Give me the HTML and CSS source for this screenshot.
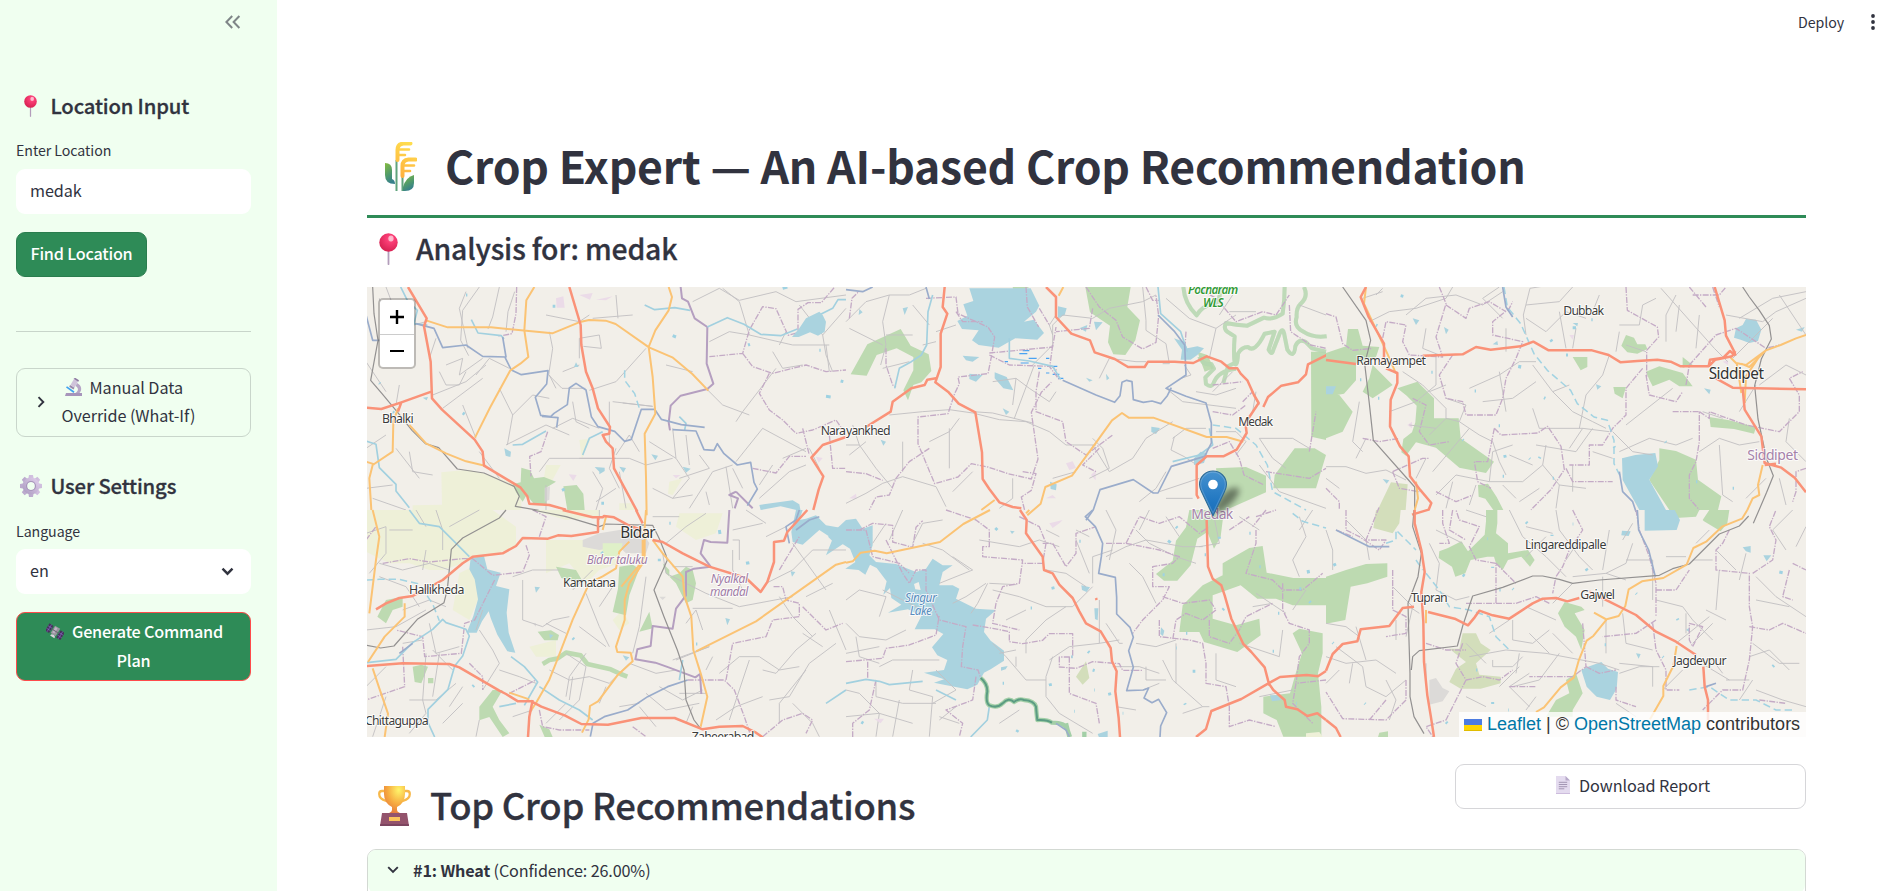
FILE: index.html
```html
<!DOCTYPE html>
<html lang="en">
<head>
<meta charset="utf-8">
<title>Crop Expert</title>
<link rel="stylesheet" href="styles.css">
</head>
<body>
<svg width="0" height="0" class="defs">
  <defs>
    <radialGradient id="pinHead" cx=".62" cy=".3" r=".75"><stop offset="0" stop-color="#ff9ab5"/><stop offset=".25" stop-color="#fb3f77"/><stop offset="1" stop-color="#d41f4f"/></radialGradient>
    <linearGradient id="leaf" x1="0" y1="0" x2=".4" y2="1"><stop offset="0" stop-color="#86bb3f"/><stop offset=".6" stop-color="#4f9a6c"/><stop offset="1" stop-color="#37808b"/></linearGradient>
    <linearGradient id="gold" gradientUnits="userSpaceOnUse" x1="10" y1="34" x2="26" y2="0"><stop offset="0" stop-color="#ffae3d"/><stop offset="1" stop-color="#ffdf4f"/></linearGradient>
    <radialGradient id="cup" cx=".7" cy=".15" r=".9"><stop offset="0" stop-color="#fff56a"/><stop offset=".6" stop-color="#f6a83f"/><stop offset="1" stop-color="#e57c3e"/></radialGradient>
    <linearGradient id="gearFill" x1="1" y1="0" x2="0" y2="1"><stop offset="0" stop-color="#dccbe8"/><stop offset="1" stop-color="#b09fc4"/></linearGradient>
    <linearGradient id="markerFill" x1="0" y1="0" x2="0" y2="1"><stop offset="0" stop-color="#4592cf"/><stop offset=".7" stop-color="#2076c1"/><stop offset="1" stop-color="#1d6fb8"/></linearGradient>
    <filter id="soft" x="-50%" y="-50%" width="200%" height="200%"><feGaussianBlur stdDeviation="3"/></filter>
    <symbol id="pushpin" viewBox="0 0 19 32">
      <path d="M8.6 16h1.8v15.5q-.9 1-1.8 0z" fill="#b39dbb"/>
      <circle cx="9.5" cy="9.5" r="9.2" fill="url(#pinHead)"/>
      <ellipse cx="12" cy="5.6" rx="2.6" ry="3" fill="#ffd0dc" opacity=".75"/>
    </symbol>
  </defs>
</svg>
<div class="app">
  <aside class="sidebar">
    <div class="collapse">
      <svg width="16" height="14" viewBox="0 0 16 14" class="stroke-grey"><path d="M7.2 1 1.4 7l5.8 6M14.4 1 8.6 7l5.8 6"/></svg>
    </div>
    <h3 class="side-heading">
      <span class="side-icon"><svg width="13" height="22" viewBox="0 0 19 32"><use href="#pushpin"/></svg></span>
      <span>Location Input</span>
    </h3>
    <label class="label label-location">Enter Location</label>
    <div class="field"><span>medak</span></div>
    <button class="btn btn-find"><span>Find Location</span></button>
    <hr class="divider">
    <div class="override">
      <svg width="8" height="12" viewBox="0 0 8 12" class="stroke-dark"><path d="M1.5 1.2 6.3 6l-4.8 4.8"/></svg>
      <div class="override-text">
        <svg width="18" height="18" viewBox="0 0 18 18" class="microscope">
          <path d="M1 15h16v3H0z" fill="#a795bb"/>
          <path d="M12 5c4.500 2 5.500 7 2.500 10h-4c3-2 3.500-5 0-7z" fill="#b6a6c6"/>
          <path d="M5.500 7 9.500 0l4 2.500-4 7z" fill="#cfc3da"/>
          <path d="m8.500.5 2-.5 3.500 2.200-.7 1.600z" fill="#8d7aa1"/>
          <path d="m5 7 4.500 2.800-1 1.700-4.300-2.700z" fill="#9a88ad"/>
          <path d="m2 8.200 7.500 5.200-1 1.500L1 9.600z" fill="#3fa4f0"/>
        </svg><span>Manual Data</span><br><span>Override (What-If)</span>
      </div>
    </div>
    <h3 class="side-heading settings">
      <span class="side-icon"><svg width="22" height="22" viewBox="0 0 22 22">
        <g fill="url(#gearFill)"><path d="M9 0h4l.7 4h-5.400zM9 22h4l.7-4h-5.400zM0 9v4l4 .7V8.300zM22 9v4l-4 .7V8.300z"/><path d="M9 0h4l.7 4h-5.400zM9 22h4l.7-4h-5.400zM0 9v4l4 .7V8.300zM22 9v4l-4 .7V8.300z" transform="rotate(45 11 11)"/></g>
        <circle cx="11" cy="11" r="6.200" fill="none" stroke="url(#gearFill)" stroke-width="4.600"/>
        <circle cx="11" cy="11" r="4.500" fill="none" stroke="#a796ba" stroke-width="1.100"/>
      </svg></span>
      <span>User Settings</span>
    </h3>
    <label class="label label-language">Language</label>
    <div class="field select"><span>en</span>
      <svg width="13" height="9" viewBox="0 0 13 9" class="stroke-thick"><path d="M1.500 1.700 6.500 6.700l5-5"/></svg>
    </div>
    <button class="btn btn-generate">
      <span class="gen-line"><svg width="18" height="17" viewBox="0 0 18 17">
        <g transform="rotate(32 9 8.500)"><path d="M0 4.500h4.800v8.500H0zM13.200 4.500H18V13h-4.800z" fill="#453459"/><path d="M2.400 4.500V13M0 7.300h4.800M0 10.200h4.800M15.600 4.500V13M13.200 7.300H18M13.200 10.200H18" stroke="#8a63c8" stroke-width=".6"/><path d="M6 3.500h6V12H6z" fill="#9b93a0"/><path d="M7 4.500h2.500v6H7z" fill="#bdb5c3"/><path d="M4.800 8h8.400" stroke="#6a6272"/><path d="M7 14.500a2.500 2.500 0 0 1 5 0z" fill="#d9d2dd"/></g>
      </svg><span>Generate Command</span></span>
      <span>Plan</span>
    </button>
  </aside>

  <main class="main">
    <header class="topbar">
      <span class="deploy">Deploy</span>
      <svg width="4" height="16" viewBox="0 0 4 16"><g fill="#31333f"><circle cx="2" cy="2" r="1.900"/><circle cx="2" cy="8" r="1.900"/><circle cx="2" cy="14" r="1.900"/></g></svg>
    </header>
    <h1 class="title">
      <svg width="32" height="50" viewBox="0 0 32 50">
        <path d="M11.500 18v31M17.500 34v15" stroke="#5fa37c" stroke-width="2"/>
        <path d="M0 21q7 0 7 7v9q3 1 3 5-10 0-10-9z" fill="url(#leaf)"/>
        <path d="M29 33v8q0 8-9 8h-2v-4q3-10 11-12z" fill="url(#leaf)"/>
        <g fill="none" stroke="url(#gold)" stroke-linecap="round">
          <path d="M12.500 18V8q0-6 6-6.500h7" stroke-width="4"/><path d="M14 7.500h10M14 13h6" stroke-width="2.600"/>
          <path d="M17.500 34V24q0-6 6-6.500h7" stroke-width="4"/><path d="M19 23.500h10M19 29h6" stroke-width="2.600"/>
        </g>
      </svg>
      <span>Crop Expert — An AI-based Crop Recommendation</span>
    </h1>
    <h3 class="analysis">
      <svg width="19" height="32"><use href="#pushpin"/></svg>
      <span>Analysis for: medak</span>
    </h3>

    <div class="map">
      <svg class="map-canvas" width="1439" height="450" viewBox="0 0 1439 450">
        <!-- north-west -->
        <g transform="translate(-1 -2) scale(.33333)">
          <path class="farm" d="M226 562l80-8 60 14 80 30 20 40 0 37H140v-14l88-2zM640 465l34-4-26 60zM540 540l44 0-34 62-20 0zM910 590l40-10-30 50-14-4zM760 655h40l10 20h-50z"/>
          <path class="wood" d="M466 548l26 8 12 24 30-4 36 14-30 18 2 52-36 0-24-30-12 20-20-28-10-24 24-6zM592 604l40-4 20 26 4 49h-52z"/>
          <path class="urban" d="M536 608l16-4-2 40-14 6z"/>
          <path class="pink" d="M570 40l22-6 4 34-24 0zM640 30l40-6-8 20zM690 44l50-10-20 12zM608 568l24 2-10 18zM920 570l24 0-14 10zM1350 515l20 4-12 14z"/>
          <path class="minor" d="M60 6l34 90M400 6l-20 90-14 36M340 6l-50 70-6 90 24 46M420 140l6-60 20-60M300 20l-20 50 26 120M210 160l-20 60M240 240l50-20-10 50 70-50M220 260l20 40 40 0 20-40M330 270l40-50 60 30M540 90l100 20 30-20M640 160l60-10 6 40-54-6M750 30l6 70M680 100l120-10M550 140l10 50-12 80 40 40 70 0M840 190l-90 100-80 26M740 350l120 14-90-10M730 350l0 130M640 160l0 60M590 260l50-20M550 270l20 40M400 310l40 80-16 90M440 390l60-60 50 10M330 460l-40-100M200 330l100-40 60-50M230 370l120-90M420 480l120-60 70 30M560 430l60-30 80 30M620 350l10 60 40 20M640 520l150 0 50 20 80-20M520 560l30-40 200 0M750 490l-20 60 30 60M820 500l-30-50-40 60M850 470l80 50-10-90M930 520l40 60-50 60M960 450l10 90M1000 510l30 40-90 30M1100 540l-60 20-70 110M1080 545l20 125M1100 550l30 60M1190 430l-80 100M1190 430l130 70M1130 380l100-130M1110 410l20-30M1020 310l50 50 80 30M900 240l80 20M1030 170l60-30 60 10 130 30M1150 150l-30-100-50-40M980 50l80-40 60 36 110-26 60 30 150-20M1220 200l30 50 60-10M1240 180l20-40M1300 60l70 90 10 60 20 50M1370 150l70-80M1390 260l-10-80M1180 640l90-80 50-20M1180 600l40-60M1330 490l30 60M1250 520l70-30M1280 180l110 0M0 490l60-40M100 300l-10 60M0 230l60 90M60 60l80 30M90 490l70 90M130 500l10 60 60 10M340 500l60 80M540 600l0 75M680 560l30 50-20 65M750 610l-60 40M860 610l60 30 60-10M1030 660l-10-40M760 560l20 110M20 640l100 35M0 610l80-10M40 40l30 100 110-30"/>
          <path class="admin" d="M452 6l-2 80-12 60-40 8M1030 215l100-10 20-70 40-70 40 6 36 80 30-8 0-70 30-20 40 0 40-47M1130 205l30 40 60 20 100-25 60 20 60-5M1210 265l-30 60 30 50 40 30 40 40 50-10 70-30 20 30M1160 550l70 14 40-50 50 0M1390 450l10 100 40 0M545 440l-20 60-34 14 4 60M1310 430l20 80"/>
          <path class="border" d="M944 6l4 34 18 10 20 50 38 26-2 110 20 60-18 16-80 20-30 30-6 50 4 24M1110 620l-20 10 26 10-10 30M1110 620l50 50"/>
          <path class="river" d="M104 6l20 40 30 30-10 40 40 4M316 104l20 40 70 8 8 10M836 60l30 14 60-6 46 8M1024 126l60-28 50 20 50 30 60 4 50-20M440 480l30-2 70-40M0 468l30 10 10 70 50 50 0 20 40 50M650 510l20-50 40-20M1340 100l60-30 16-26 24 0M940 395l20 20-4 20"/>
          <path class="stream" d="M776 256l0 30 30 40 16 50"/>
          <path class="river-border" d="M0 90l20 76h20M150 116l54 14 26 58 70-8 50 34 70 2-10-60M416 215l20 40 30 14 80-12-4 40-34 40 16 54 30 4 10-10 40-26 6-50 20-14 30 20 16 80 20 30 50 14 30 30 20-6 30-90 40 0 20 30 60 16 70 8M528 394l48 4-4 30M920 434l70 4 24 56 30 2 10-20 20 30 40 34 40-8 10 60 10 20-30 50"/>
          <path class="water" d="M1300 130l20-30 40-20 10 10 10 20-4 30-20 12-24-10-34 14-20 0zM700 560l-14-14 30 2 0 10-16 10zM760 545l20 4-8 14zM856 508l20 4-8 14zM950 545l24 6-14 12zM415 490l20 10-2 16-14-4zM1180 660l100-14 20 12 4 20-60-14-60 11zM630 232l8 14-14 0zM170 338l16-2-4 10z"/>
          <path class="ponds" d="M560 64l8 0M920 152l10 4M1146 180l6-2M1380 334l14 2M300 30l4 0M290 384l6 4M1360 196l4 0M40 294l2 2M80 380l4 4M1424 288l8 2M1250 10l14-4M706 655l8 0M590 610l4 8"/>
          <path class="rail" d="M20 6l4 80 12 80-22 120 34 40 50 60 40 50 40 40 40 12 56 64 80 12 90 40 16 30-12 30 70 12"/>
          <path class="secondary" d="M180 106l65 21 130 0 184 18 80-33 30-7 50 2 30 10 100 70 70 30 60 50 48 50M505 6l-24 40-6 90 12 80-24 20-30 20-60 110-46 92M908 6l10 30-10 40-40 60-20 50 12 90 8 110-32 60 4 130 2 115M96 370l-14 40-2 90-60 40-10 40 6 95M0 530l26 8M130 420l50 55 60 30 60 24 60 14"/>
          <path class="primary" d="M126 6l56 94-8 24 20 106 4 110 30 34 98 90 24 36 4 42 110 66 20 26 6 22 60 4 50 14M0 368l46 4 60-20 90-32M106 352l-10 28M610 6l34 114 2 60 14 80 20 50 16 60 36 56-2 20-20 4 10 20 20 20 4 60 70 130M1440 456l-70 24-34 38 36 56-14 40-16 61"/>
          <text class="town" x="48" y="415" textLength="95">Bhalki</text>
        </g>
        <!-- north-centre -->
        <g transform="translate(479 -2) scale(.33333)">
          <path class="wood" d="M14 268l50-90 100-46 30 50 54 26 8 50-30 34-24 8-16 46-14-30 30-60 0-40-50-26-60 20-30 62zM500 6h50l-46 22zM718 6h136l-10 60 38 40-14 60-30 44-36-2-16-36 6-50-60-40zM1110 550l90-4 60 26 0 50-120 53h-30l10-60zM1286 570l60-80 60 0 34 20-30 100-128 0zM1395 200h45v265l-44-10zM1054 200l30 10 20 40-28 10z"/>
          <path id="sanctuary" class="halo" d="M1012 6q4 50 40 85q20-34 50-30q22-10 20-50M1316 6q0 40-6 80-30 20-56 12l-50 24q-34-2-64-8-10 20 10 30l16 10q-4 50 0 80l-20 10-14 50M1060 215q10 26 36 22l8 14-26 26 2 20q18 14 24-6 14-34 66-40M1166 236q8 10 10-30 10-20 30-20 20 20 50-40l30-6q-10 30-18 54 10 20 14 0 8-20 16-40 10-30 16-10 6 30 10 50 20 30 24-10 10-24 30-14l20 20 42 10M1374 6q14 30-10 50-14 14-12 40-10 30 20 44 30 20 70 14"/>
          <use href="#sanctuary" class="halo-edge"/>
          <path class="water" d="M370 10h184l26 52-10 18-36 30 30-6 30 40-20 20-66-4-50 28-60-8-20-14 20-30-50-4-14-24 30-16-12-34 30-10zM984 160l30 10 10 20 30-6 20 6-20 20-20 14-30 0 4-30zM446 262l36 14 20 40-30-6-26-30zM370 266l40 4-20 20-20-8zM350 212l50 4-20 14-20-4zM916 425l26 4-12 18-14-6zM612 590l20 8-2 18-16-4zM40 72l10 10-12 8zM170 70l16-4-10 24zM104 464l16 6-8 12zM636 64l26 6-6 20-20 10zM700 130l24-10-4 20zM744 110l26 2-20 24zM1044 520l20-20 20 4-10 30-30 6zM470 370l20 10-10 10zM720 278l20 8-10 4zM780 266l10 14-8 6z"/>
          <path class="wetland" d="M520 206l24 0M548 220l24 0M476 230l10 0M524 234l24 0M600 220l10 0M576 250l10 0M610 244l24 0M600 264l10 0M620 268l20 0M636 280l16 0M530 197l20 0"/>
          <path class="pink" d="M660 535l20-6 10 20-20 6zM735 570l14-14 0 30zM600 640l20-10 10 10zM10 640l20-14 2 16z"/>
          <path class="minor" d="M0 110l60-60 70-20 60 0 50-20M130 30l-20 80 10 70-16 60M120 150l80 0M10 130l100 50M230 180l40-10M200 60l50 60M110 250l80-20M0 480l40 0 50 70 50 60M40 480l-20-60M130 390l100-10 80-6 70 10 80 20 80 6 70 30 50 40 90 0M380 380l60 4 120 30M440 290l70-10 40 30 60 40 20-30M505 400l60-160M510 280l-10 80M560 240l60-60 0-60 30-30 90 10 50-30 50-10 50-10 40-20M620 150l-10-30 20-30M0 655l60-30 50-30 60-20 100 30 30 60M340 400l-30 40-60 30M310 430l0 120M900 230l-30 0-80-10-30 60M890 6l10 100 0 30 60 40 10 60-20 0M1015 240l20 30-30 10M1160 260l-60 60M1050 320l60 10 60-20M960 310l50 40 160 20M980 460l40-30 60 0M985 455l-10 40 40 20 30 20M960 560l-30 50-50 40M980 410l-80 50-40 60-70 40-50-80M960 40l70 60 80 30 60-40M1110 130l-20 90M1110 440l60 0 30 30-30 40M1240 460l100 0 50 30M1240 460l40 60 40 30M1220 380l10-60M740 460l30 30 20 60-60 30M940 620l120-40M960 640l80 0M620 580l70-20M500 580l0 60-40 30M170 470l0 90M380 560l-60 60M10 510l50-40M330 120l-60 20M1160 30l-40 60M1240 540l60 80 140 50M1360 60l80 30M1150 80l80 0"/>
          <path class="admin" d="M10 100l8-60 20-20M120 190l0 50 20 60 10 6M240 40l90-4 6 50 90 40 20 30-10 60-10 50-90 10 4 20-14 30-20 60-90 10 0 80 50 120 70-20 40-40 50 10 60 20 70 16 20-60-10-70-10-70 30-60 30-30M430 204l190-18 10-60M430 210l60 30 120 4 30 40M620 180l-8 60 20 16M330 80l20 30 60 0M540 6l4 60 34 60M580 70l30 50M740 70l-10 60-100 10M720 6l40 60 50 40 20 50 60 36 40-20 8-80-8-60M900 6l20 40 20 0M580 260l-10 60 0 60 80 30 10 60 60 40 80-60M1020 140l-4 60M1040 0l70 40 60 70 80-30 40 10 40-60M250 490l-60 40-40 50-20 50-40 6-20 39M0 560l60 6 50 20M530 560l40 6-14 50-30 20 10 40M760 490l-50 50 40 20M1100 300l90-10M1100 380l60 10 40-30M1190 350l30-30 20 40M1100 490l50-20 30 50 14 50 60 30M1260 560l130 20 50-30M1330 60l4 80 60 40 46 10M1390 500l20-120"/>
          <path class="river" d="M490 160l0 60 60 8 70 16 24 40M260 30l-14 50-4 100-16 30-30 20-36 20-14 60M936 6l8 80 60 54 20 60M1090 430l10 50-40 30-80 20"/>
          <path class="stream" d="M1100 420l70 10 60 50 34 60 16 80 100 55"/>
          <path class="river-border" d="M0 14l50 6 30-14M240 6l10 36M650 286l100 44 56 22 16-20 6-40 14-6 16 4 4 54 30 8 26-4 26 8 20-24 12-24M936 90l50 50 30 40 4 90-60 40 60 24 60 20 16 60 0 60-20 40-100 30-40 80-14 0-60-40-100 30-20 60-22 32"/>
          <path class="secondary" d="M652 6l-14 26M1192 470l-50-14-60 0-160-58-74 0-20-14-30 22-50 70-70 96-80 34-14 50-40 35M446 645l-40 30"/>
          <path class="primary" d="M296 6l-6 60 14 20-20 60 0 100-16 46 40 30 30 34 50 26 10 60 10 60 2 80 20 30 30 40 40 14 26 4M270 280l-26 4-8 16-40 10-56 40-6 30-74 46M600 6l30 30 0 60 46 50 56 20 14 36 60 20 40 24 50 0 10-16 80 0 56 4 40-20 44 16 24 20 24 0 10 16 20 20 20 44 14 24 0 0-40 60 4 30-30 50-40 20-50 0-30 26 0 90 6 11M1252 366l14-30 40-34 50-10 24-24 6-30 60-30"/>
          <text class="town" x="0" y="451" textLength="134">yankhed</text>
          <text class="town" x="1177" y="424" textLength="104">Medak</text>
          <text class="park" x="1026" y="27" textLength="151">Pocharam</text>
          <text class="park" x="1071" y="66" textLength="62">WLS</text>
        </g>
        <text class="town" transform="translate(-1 -2) scale(.33333)" x="1364" y="451" textLength="76">Nara</text>
        <!-- north-east -->
        <g transform="translate(959 -2) scale(.33333)">
          <path class="wood" d="M66 132h30l14 50 50 4-10 30-60 20 0 50-36 40-54 10V204l60-20zM0 330h40l40 50-30 60-50 20zM140 240l60 60-60 40-30-20 20-40zM214 310l60-20 50 50 0 60 74 0 6 60 100 70-24 34-80-16-70-60-60-16-30 40-14-10 6-40 26-20 10-30 4-50-30-30zM900 150l24 8 10 20 24 0 6 14-30 14-30-4-18-20zM960 260l40-16 70 20 30 40-40 0-30-20-50 20-10-20zM1070 216l30 24-30 8zM740 216l44 0 0 30-20 10zM862 306l38 0-10 34-24-14zM1150 396l60 10 80 20-6 20-60-14-70-6zM1000 490l50 8 60 26 6 60 70 50-10 41H1030l-60-90 30-60zM456 600l30-4 26 40 20 39h-30l-24-34-20-6z"/>
          <path class="orchard" d="M195 592l50 6-6 77h-84z"/>
          <path class="water" d="M888 520l40-10 60-6 8 40-26 40 50 91h-80l-50-90zM1230 130l20-10 10-18 30 2 16 30-10 34-26 6-26-10-20-6zM0 304l30 0-10 24-20 0zM260 100l20 6-10 14zM354 126l14 8-8 14zM1134 310l20 4-4 14zM170 582l20 4-8 10zM500 178l14-10 2 12zM1410 134l26-8-8 14zM810 298l16 6-12 10zM740 114l16 0-2 10z"/>
          <path class="pink" d="M730 150l14 0-4 14zM244 420l14-10 0 20zM1190 230l16-4 0 14z"/>
          <path class="minor" d="M130 110l60-30 80-10 90-30 20-34M240 90l60-50 90-10 80 30 60-40M300 130l-10 60 50 20M110 40l60-20M530 100l-60-60 50-34M540 130l0 70M600 150l-8-60 20-80 60-10M600 60l100-10 40-44M600 100l60 40 60-60 60 20M700 80l20 110M740 190l10-60M880 120l60 0 10-60 40-20M870 200l10-60M1005 10l160 180 40 40M1110 190l10-100M1050 30l-30 60 0 80M1240 100l100-60 100-20M1200 90l110 20 40-30 90-40M1220 220l120-120M1360 30l80 120M1300 300l80-60 60 30M1240 380l50-80M230 260l60 40 70 70 0 30 40 10 60 40 40 20 20 60 20 40M330 430l-80-10M360 400l-50 50M190 380l80-30 60-50 0-90M310 320l50-20M400 410l20-50-60-20M430 310l90-40 60-40 50 0M520 260l20 120M560 340l70-50M620 240l60 80 60 60 60 30 40 20M680 320l50-20M470 350l90-10M620 370l20 60 130 0 80 10M760 430l20-100 50-60 20-60M770 430l-40 60M900 420l140-110M860 440l60 60 60 10M880 500l90-40 80 20 50-20M800 430l-50 70-120-20M560 480l-60 20-10 90 100 0 60-50 10-60M620 540l-70-30M650 540l50 60 80 10M640 610l-60 40M700 600l-10 70M740 540l0 80M800 500l60 20M0 545l60 0 60 20 60-10 60 30M0 580l40 30M330 630l60-60 100 20M300 520l-30 60M430 430l-110 130M380 590l-20 80M530 600l40 40M100 350l-20 120 30 30M120 460l-30 60M1120 500l60-40 60 20 60-10M1180 480l10 150 30 20M1130 380l60 20M1390 400l-10 70 60 60M1320 580l-60 60M1360 580l20 80M1060 60l-10 80M820 30l-20 50M450 600l-20 60M960 200l-60-20M150 30l20-20"/>
          <path class="admin" d="M0 86l30 10 20 80 30 20 60-6M360 60l60 40 10-30 60-20 50 30M340 6l20 50-30 100 20 60-100-6-20-40 10-50-60-10-10 50M380 210l-40 60 20 70 50 10 10 40 90 0 20-50 10-60 30-60 20-50-90-20 0-40 50-40 10-20M505 430l20 20 110-6 30-20 40 60 10 70-40 60-60 60M505 430l-20 100-40 0 10 60 40 20M900 6l4 70 90 50 4 30-36 40 0 80M950 250l-50 60 0 80-40 40-30 50-40 0 0 60-60 0M960 270l10 60 80 20 20-30M1040 380l80 0 0 90-10 60-20 40 0 70 30 35M1080 300l10-60 80-90 60-20 90 60 40-10M1120 380l30 20 0-20 110 40 100 20 60-60 0-50-30-50 40-20M1100 30l80 0 20-24M1090 6l50 60M200 560l90-40 20 0M200 560l20 50 60 10M720 550l20 40 60 0 60 0M260 340l40 20-20 80 30 40 60-10M1440 550l-30 10 0 60-10 30M0 610l40 40 0 25M1160 6l20 60M110 460l50 10 60-10M330 620l60 30 50-20"/>
          <path class="stream" d="M534 6l10 60 40 50 40 90 40 50 70 60 20 40 50 40 40 10 20 60 0 70 20 40"/>
          <path class="river-border" d="M880 560l10 60 30 30 10 30M530 6l10 60 20 30"/>
          <path class="ponds" d="M224 32l8 2M150 120l4 2M674 164l4 6M720 210l6 0M654 338l4 2M580 250l2-10M446 318l4 0M316 262l4 0M740 128l10 0M796 104l4 0M536 510l2 8M610 520l2 2M640 520l2-4M864 484l2 4M410 464l2 2M1018 470l2 2M1110 590l4 0M1220 610l4 0M156 340l4 0M530 574l4 0M680 580l4 0M102 284l4 0M518 422l4 0"/>
          <path class="rail" d="M50 6l70 100 14 60-18 70 14 120 12 110 124 140 0 69M1250 6l20 30 30 40 30 46 6 40-30 60-20 80 10 100 26 120 20 50-20 50-40 93"/>
          <path class="secondary" d="M120 6l-6 50 70 150 26 60M1440 150l-30 10-46 20-44 16-60 44-30-6-20-20M1300 214l-40 60-4 80M1320 196l-50 50-24-10M1232 234l8 50 6 40M1310 540l-14 60 4 30-20 10-16 35M270 590l6 50-10 35"/>
          <path class="primary" d="M120 6l-16 30 24 60 46 80 0 40-10 20M0 225l90 12M180 250l34 14 0 30-20 50-2 80 30 60 26 30 4 60 30 40 34 40-8 20-50 15M290 212l120-4 40-22 44 8 90-10 38-14 46 26 130 0 50 14 36 22 50-4 60-4 40 6 30 14 84 0 20-20 50-10 10-16M1148 244l4-20 40-6 20-20 14 12M1166 6l30 100 4 46 26 50 2 10M1170 280l50 28 220 5M1250 310l6 64 50 80 10 80 50 14 40 30 34 44M1316 540l34-4"/>
          <text class="town" x="91" y="241" textLength="209">Ramayampet</text>
          <text class="town" x="712" y="91" textLength="122">Dubbak</text>
          <text class="city" x="1148" y="281" textLength="166">Siddipet</text>
          <text class="district" x="1264" y="526" textLength="152">Siddipet</text>
        </g>
        <!-- south-west -->
        <g transform="translate(-1 223) scale(.33333)">
          <path class="farm" d="M0 0h380l70 50 0 60-90 30-40 10-90 30-40 0-60-20-60 0-80-40zM500 0h200v20l-100 10zM540 90l120 0 60 10 40 60-60 20-40 40-50-60-70 30zM940 10l130 0-20 60-60 20-60-40zM280 190l60-30 0 100-30 70-50-30zM490 410l80-20 0 50-60 0zM740 330l30-30 20 40-30 20z"/>
          <path class="wood" d="M60 270l50-10 0 30-30 10-20 40-26-20zM140 470l26-6 20 6-20 50-20-4zM186 504l16 0 0 16-16 0zM570 170l60 10 20 34-30 0-34-10zM760 170l40-6 20 12-30 80-10 60-40-10 16-70zM890 160l20 20 0 20 30-10 20-20 20 10 10 40-10 50-20 10-30-60-30-30zM850 305l10 50-40 10 20-40zM515 365l40-4 24 14-4 16-40 0zM340 590l40-50 30 0-30 50 20 40 30 40-20 11-40-60-30 10zM520 644l30 14 10 23h-24z"/>
          <path class="forest-band" d="M530 462l20-12 24-4 26-18 44 8 20 26 70 16 30 14 20 8"/>
          <path class="urban" d="M650 90l50-20 120-20 30 50-10 30-60 0-20-20-60 10-50-10zM880 260l20 0-10 10zM500 340l10 0 0 10z"/>
          <path class="lime" d="M710 100l60 0-10 40-50 0z"/>
          <path class="water" d="M314 144l40-6 10 40 40 10-14 40 40 10-8 70 6 60 20 60-24-4-30-50-20-50-6-20-20 30-16 34-30 0 20-50 14-50-10-60-16-30zM1290 0l20 0-10 30 20-4 30-10 30 30 60 10 0 40-60 40 20-50-40-26-50 44-30-8-4-30zM506 230l16 2-12 16zM1078 324l14 4-8 18zM770 436l20 6-10 10zM550 372l12 4-10 10zM1274 184l14 2-10 14z"/>
          <path class="minor" d="M0 70l60-20 0 80-50 60M180 120l-10 60M40 160l70 20 80-20 60 20M210 0l20 60 0 60M110 300l80-30 50 20M0 360l90-10 90-50M190 340l20 90 70-20M180 430l-10 140 10 40-50 60M200 420l60 60M0 530l60-60M220 430l-20 130M130 570l80 0 60-50M340 360l40 60 20 40-50 80M350 300l-20 60M440 200l60-20 80 0M470 210l0 120 60 20 30-20 50-10M620 240l60-60M660 250l40 100 30 60M700 290l40-60M600 370l-60-30M640 350l80 60M550 480l60 30 60-10 60 20 60-60 80 30 60-10M660 430l-50 70-10 60M620 500l-10 70M600 430l60 40-20 100-60 60M840 200l-20 150-20 80M890 130l10 60 120 60 100 40 160-30M920 170l60 0M980 295l120 0M1100 90l20 0 0 60M1100 120l0 60 30 60M900 100l60-50 60-40M960 340l30-40 20 60M1010 540l-60 30-70-40M930 450l100-40-110 40M1060 490l60-50 60 0 60 40 60-10M1150 450l-60 180M1190 480l40 10 60-70 60-50M1240 260l40 60 60 60M1310 370l60 40M1210 570l60-10 60-100 80-60M1320 480l-80 100 0 60M1280 580l60 60 20 40M1020 480l20-40M1020 550l-80 0M1050 630l60-40 80-30M900 600l100-20M960 640l20-50M820 590l50 60M700 580l20-50M760 590l60-10M540 640l60-60M440 620l60-20M400 480l60 20 50 20M250 590l40-60M340 630l-10 50M230 640l60-60M60 560l-40 120M40 200l80 30 40 60M1200 220l80-40 60-60 100 0M1280 100l100 140M1200 80l60-30M700 0l0 30M860 20l80 0M1140 0l60 40M1100 60l90-20M340 0l-90 50M150 0l30 50M70 60l70 0M900 600l-60-50M1390 300l50 120M1400 220l-80 40M110 400l60-10"/>
          <path class="admin" d="M0 90l30-40M50 160l80-14 60 10 100-10 30 0 60 50 90-10 20-50-10-30M386 210l-60 120-30 10-10 90-110 10-6-60-80-20M110 410l6 120-116 40M310 460l40 40 0 40M430 550l80-40M520 600l10 50 50 10 90 0M965 510l110 0 30 30 30 80 20 60M1080 510l20-110 100-20 20-50 80-10 0-40-40-10-10-40-30 0M1310 290l40 40 30 30 50-20M1240 180l60-100M800 650l40 30M1190 680l60-50 60-20 30 20-20 40M500 0l40 20-20 60"/>
          <path class="border" d="M1090 0l-6 98-50-2-20-6-10 40 30 40-50 6-24 10 0 70-30 40-10 60-60-8-6 60-40 10-6 30 60 10 40 14 80 30 14-10 4 60"/>
          <path class="river" d="M130 0l30 40 60 10 30 30 60 60M0 458l90-10 50-50 60-40 30-30 10 10 60 20 10 20-20 60-24 30-20 70-60 60 0 40 20 43M435 440l40 30 40 46-40 70M520 530l60 40 60 30 40 30M400 590l50-10M950 450l-10 60M1380 580l60-40"/>
          <path class="stream" d="M0 210l40-2 60 0 60 14 40 60 20 50"/>
          <path class="river-border" d="M965 510l-60 20-60 30-60 40-70 20-34 20-8 40M100 430l40-30M1300 0l-10 30-30 20 10 50M1290 60l40-30 30-10"/>
          <path class="ponds" d="M1060 60l2 12M880 146l0 8M620 384l4 4M1140 160l10-2M320 530l4-4M990 402l4 0M910 40l4 0M706 126l4 4"/>
          <path class="rail" d="M420 0l-20 24-110 60-34 34-12 120-10 40-80 50-70 80-40 6-50-10M500 0l100 20 100 30 20-8 140 4 20 40 20 50 4 14-40 90 30 80 40 100 20 60 6 90 24 60 20 26"/>
          <path class="secondary" d="M20 0l20 80-10 70-20 160M116 280l0 40-60 60-50 76M20 475l20 60 26 76-10 70M720 20l-10 40M836 50l0 90-20 30-50 60M840 0l-4 50M790 95l-30 30-10 50-40 24-40 20-50 110-50 130-20 50-40 70-20 30M830 90l0 70-40 60-14 50 0 60-26 80 4 16 40 2 6 26-44 40-60 80-24 14-4 40-20 40M860 90l30 40 60 70 6 60 20 60 6 100 22 70 20 70-20 90M990 424l180-90 240-170 30-8M430 548l60 20"/>
          <path class="primary" d="M590 0l90 22 30 0 4-4 30 4 44 24 40 14M696 22l0 44-80 12-40-2-30 10-76-2-20 24-40 22-90 10-30 20-60 50-90 48-40 6-40 16-30 18M0 468l110-8 140 2 30 10 120 70 20 10 36 22 40 0 30 16 70 26 50 26 80 2 100-20 100 0 84 34 50-8 70-2 40 20 20 14M500 570l-10 50-4 61M860 90l30 6 60 34 80 40 110 34 44 42 20-30 20-60 0-60 30-4 10-26 60-66M810 0l20 40"/>
          <text class="city" x="763" y="84" textLength="106">Bidar</text>
          <text class="taluk" x="662" y="163" textLength="183">Bidar taluku</text>
          <text class="taluk" x="1034" y="218" textLength="112">Nyalkal</text>
          <text class="taluk" x="1032" y="257" textLength="115">mandal</text>
          <text class="town" x="591" y="231" textLength="159">Kamatana</text>
          <text class="town" x="129" y="251" textLength="166">Hallikheda</text>
          <text class="town" x="-3" y="645" textLength="191">Chittaguppa</text>
          <text class="town" x="977" y="694" textLength="188">Zaheerabad</text>
        </g>
        <!-- south-centre -->
        <g transform="translate(479 223) scale(.33333)">
          <path class="wood" d="M1030 0h104l-10 80-20 36-20-50-30 20-20 80-40 46-40 0-24-20 50-40 10-60 30-40zM1130 160l80-46 40-6 12 80 80 16h98v82l-100 0-50-20-56 0-50-40-84 30 0 70 70 20 70-20 4 50-70 50-100-30-14-30-60 0 10-80 60-60 60-30zM1340 370l20-14 70 14 0 60-14 60 10 100 0 90h-114l-20-50-40-20 0-50 80-10 20-70 16-50z"/>
          <path class="farm" d="M1380 670l40-4 10 15h-50z"/>
          <path class="orchard" d="M690 500l30-46 10 50-20 20z"/>
          <path class="water" d="M0 30l30-4 20 30 30-10 0 60-10 30 20 20 60 6 60 24 30-10 20-30 30 20 30 0-30 20-10 40 40 0 20 10-10 30 60 30 60 4-30 26-6 40 20 26 40 30 0 30-40 26-20 10-20 36-30 14-70-14-30-6 30-10-60-20 60-8 10-30-30-14-16-24 34-40-26-14-60 0 20-40-40-20-60 10 40-24-30-20-4-30-20 20 10-40-30-40-20-10-14 30-20-14-40-4 30-20-16-40-26-16-20 0-20-20zM706 226l26 6-10 14-14-6zM745 295l12 0-2 36-8-4zM465 472l20-4-6 10-14 4zM1272 556l20 0 16 14-30 4zM755 672l30-10 0 20h-26zM492 62l14 2-8 8zM945 352l10 10-4 16-8-6z"/>
          <path class="island" d="M204 222l14-6 6 24-16-2z"/>
          <path class="minor" d="M0 270l40-30 80 20-20 60M110 240l120 60M200 100l30-60 60-10M80 100l40-60M130 90l40-90M230 100l60 20 80 60M380 180l-100 40M420 220l-60 40-40 20M425 220l-30 60-20 30M430 220l80 4M400 90l120 20 60-20 60 20M600 60l40 20M0 340l40 40 80 10 60-30M30 380l10 60 60 20M0 430l100-20M100 470l40-20 60 0 80 0M90 510l0 50 80 20 100 0M0 540l40 10 60 60-10 70M160 570l-20 110M200 480l-10 60 70 20-10 120M270 480l60 60-70 40M330 590l-50 40M280 620l60 20M0 620l100-10 100 30M440 400l40 40 60 70 60 0M460 430l50-10M510 440l0 30M480 330l60-30M540 430l0-40 60-60 60-40M440 240l80 20 80 30 80 0 60-60M600 500l0 60 40 50 100 60M620 440l-20 60M610 450l60-40 90-10 60-10M760 400l0-130M740 220l0-80 60-20M600 180l60 10 60 40M690 90l40 100M780 140l60-30 60-20M780 0l30 60-20 90M870 60l40 40 80 40 60 20M850 160l40 40 40 80M910 0l-30 60M900 90l110 20 60 0M960 20l40 60M780 340l40 60 10 0M690 60l40 20M810 590l60 10M800 470l80 0 60 20M900 470l0 40 60 0M950 450l30 60 90 80 20 0M870 400l60 10 60-20M990 400l0 120M1010 610l60-20M940 520l-50 20M1110 430l0 80 60 20M1300 440l10-80M1220 290l60-10M1230 250l90 60M1340 150l40-70-20-60M1340 150l20 50M1380 240l-40 60M1400 0l-40 60M1240 60l-60-40M1100 0l20 100-60 10M1240 560l100-20M320 140l60 40M460 640l60-40M1180 400l120 40"/>
          <path class="admin" d="M40 60l40-20 60 6 0 50 60 16 10-60 20-20M300 0l90 30 40 30 0 50-20 0 0 30 120 10-10 70-50 10-20 50-10 60 80 20M520 20l60 30 20 50-10 60-60 0M590 100l30 0 40 70 30-40 0-60 60-20M780 100l60 0 100 20 60 20-20 20-60 10 0 60 50 0-20 40-60 60-30 40M840 100l20-40 20-40 60 20 60-20 60 50 30-20M1230 20l60-20M1230 60l0 40-30 90 80 20 30 30 60 0 60-50M950 260l60 20 80-10 20 30-40 30-50-20-30 20-10 60M940 330l0 50 90 10 40 10 10 60 0 60 60 10 10 60 0 60 60-20 80 20M1090 330l0 50 60 20 30-40 20-40 80-40M1310 220l0 80 20 40 60 20 0 40-30 40-10 80M0 455l110-10 10-30 70-10 80-30 10-60M65 455l0 50M90 510l-20 90-50 40 0 41M390 500l-10 70-80 30 50 40-10 40M120 90l50 100 20 30 20-40 30 0 0 60 40 90 80 20-10 60-4 60 50 10 10 30 20 20M0 60l60 0 20 80 80 20 30 30M380 345l60 10 50 10 0 30 40 6 60-10 20-20 70 0 0 70-40 0 0 30 50 4 50-20 80 6 10 20 60 0M670 440l0 110 80 30 10 60M1440 510l-90 10-10 60 60 60M1260 0l-40 50M1150 60l60-40"/>
          <path class="river" d="M0 520l60-12 40 6 30 10 100-10M430 590l-6 40-50 51M270 540l60 30"/>
          <path class="gorge-halo" d="M404 504q20 16 20 40-6 34 6 42 24 10 40-6 18-20 34-4 16-12 30-6 30 2 36 20 2 26 4 40 30-2 44 8 40 0 46 20l8 23M660 640l10 40M715 665l0 16"/>
          <path class="gorge" d="M404 504q20 16 20 40-6 34 6 42 24 10 40-6 18-20 34-4 16-12 30-6 30 2 36 20 2 26 4 40 30-2 44 8"/>
          <path class="river-border" d="M740 0l-22 20 30 30 22 50-4 40-8 50 50 12 4 60 0 50 40 40 10 30-14 40 14 50-20 70 50-2 16-6-14 30 24 14 20-10 24 40-18 40-2 33M630 640l30 20 10 20"/>
          <path class="ponds" d="M448 60l6-6M554 294l4 0M620 230l2 8M726 424l4 4M740 480l6 2M676 440l4 0M470 520l4 0M612 520l2 8M684 604l2 0M744 540l2 0M790 548l2 8M830 610l2 0M1076 134l4 0M950 194l6 0M990 414l2 0M1040 484l8 0M1130 300l4-4M1296 310l4 0M1360 236l6 0M1390 274l4 4M966 92l8 6M990 50l4 4M1386 180l2 10M1120 80l0 6M1240 170l4 0M1280 424l4 0M1350 580l2 0M46 636l6 4M516 660l-4 6M700 94l4 0M1020 370l4 0M1016 580l2 4M1210 70l4 0"/>
          <path class="stream" d="M1340 10l30 24 70 20"/>
          <path class="pink" d="M610 40l40-10-10 10-20 14zM84 626l30 0-10 14z"/>
          <path class="secondary" d="M0 158l20-4 24-26 42-6 36 8 160-34 70-54 80-42M550 0l-10 10"/>
          <path class="primary" d="M522 0l20 30-2 40 50 70 4 40 26 10 20 34 40 40 20 40 20 36 44 24 30 50 4 40 14 30-4 60 10 80 4 57M1082 30l4 140 14 36 26 20 10 30 20 70 36 76 24 24 40 46 14 54M1050 681l30-24 16-54 90-36 80-46 36-20 80-6 34 4 24-16M1268 520l14 20 34 30 4 20 34 8 30 20 30-8 26 20M750 264l2 6"/>
          <text class="district" x="1036" y="28" textLength="126">Medak</text>
          <text class="lake" x="177" y="276" textLength="95">Singur</text>
          <text class="lake" x="191" y="315" textLength="67">Lake</text>
        </g>
        <!-- south-east -->
        <g transform="translate(959 223) scale(.33333)">
          <path class="wood" d="M0 200l60-20 60-18 64-2 0 40-60 20-50 10-16 100-50 10-8 0zM480 0h34l0 40-4 30 36 30 0 30 60-10 20 30-14 20-26-30-40 10-16 30-20-20-6-20-20 0-50 10-16 40-30 10-10-30-40-26 2-20 26-10 40-20 20 30 50-50 4-40zM1030 0h90l-10 20-60 4zM1130 30l20-30h60l-6 40-20 24-50-30zM696 310l20-34 50 14 10 10-30 10 30 50-10 60-16-40-34-30zM720 510l30-20 20 60-30 50 0 20h-80l30-50 40-20z"/>
          <path class="orchard" d="M150 0h74l-4 40-20 30-58-16zM410 370l40 0 14 30 30 20-44 40 10 34 64 6 0 20-60 16-60 0-34-20 20-40 30-20-50-40 30 0z"/>
          <path class="urban" d="M310 510l20-6 20 30 20 10-20 30-40 10z"/>
          <path class="water" d="M956 0h90l16 30-10 30-96 2zM766 480l20-10 40-14 20 20 30 10-4 50-20 34-40-10-30-30zM888 62l26 2-6 14-22-2zM1250 112l24-4 0 20-14-4zM1312 136l24 0-14 18zM930 430l14 2-6 14zM1080 360l8-6 2 12z"/>
          <path class="minor" d="M0 60l20 60 0 60M0 440l60 20 90-10 60 40M40 480l-40 40M80 460l-10 60M30 410l80 60 10 60 60 30 60-50M90 350l30 100M0 340l60 10 40 30M60 30l60 60 10 60M200 230l60 60-20 90M310 100l30 60-10 80 60 30 40-10M330 60l60 30 20 10M550 0l40 80 70 60 60 60M690 0l10 60 60 80 40 40M760 90l-40 60M740 200l100-10 60 20M830 200l0 90M740 220l-60 60M850 60l-20 120M890 90l30-50M920 100l-20 60-60 30M900 150l80 0 0 120M560 330l0 60 60 10 50-40M600 290l90 40M490 370l60-40M610 370l60 60M680 370l60 60M430 440l110-20 120 10 160 30 60 20M500 450l0 20 60 0 30-30M580 430l-10 60M550 530l60-40M550 530l60 60M420 400l60 60M520 530l60-60M700 430l-60 80-80 20M840 330l0 100M890 310l10 90 80 20M880 490l60-20 60 0M870 580l60 40M880 460l100 10 0 60M1050 400l100-80M1100 400l60-60M1110 450l100 60M1200 510l70 0M1160 450l30 40M990 270l80 20 30 40 60 60M1140 300l60 30M1080 310l0 60M1170 120l60 60M1100 150l60 0M1180 180l-10 120M1290 200l60 60 90 60M1290 270l100 20M1280 400l80 60 60 0M1270 440l60-20 60 60M1280 510l-40 60M1290 540l80 30 70 20M1150 60l-40 40M1400 0l-60 60 40 60M1440 50l-30 60M300 460l0 60M210 330l0 60M250 290l30 20M480 20l-60-20M600 50l80 20M600 140l60-60M630 560l-30 40M420 560l60 30M180 510l30 60-20 60M1020 140l60 0M1010 540l60-60M1260 130l-20 80"/>
          <path class="admin" d="M60 0l0 60 40 20 60 40 20-30-60 0 40-100M30 60l50 20M350 0l0 40 20 60-30 0M200 180l0 60 0 60 40 20 0 50-60 10M420 280l60 0 90 0 60-20 40 20M510 280l0-120-60-10-20-40 30-60-60-20-10-30M510 160l60 60M740 0l30 60-40 60-20 50-20 30-10 50M930 0l10 60 30 80 20 80 0 100M990 240l60 0 40-60M990 330l-60 40-100 10M980 340l10 80 30 60 0 60 40 0M1210 60l-20 40-20 20 0 60 100 10 0 100 10 60-10 100-20 90-60 0-60 60M1270 350l60 10 40-20 70 30M1400 160l40 20M1390 180l-20 80 30 10M1090 340l40 10-30 60-10-20zM1280 190l60-40 10-60-20-40 20-50M770 340l10 130-40 30-130 0M780 470l40 20 50-10M870 530l0 40 60 20M550 530l80 0M380 0l-10 60 50 30M410 400l-20 60 30 50-30 60-30 60-60 20 20 30M420 510l50-10 50 10 40-30M240 510l0 60-60 60-130-4-50-80M300 400l60 20 60 0M130 630l50-60M1300 570l80 10"/>
          <path class="stream" d="M300 190l40 50 30 50 60 10 60 20 20 60 40 40M180 100l30-10 0-30 40 40 20 20M270 150l20 30M1090 540l60-10 60 40 80 0 60 30 60 0"/>
          <path class="river-border" d="M30 60l40 20 60 30 60 0M934 0l4 60 30 60 20 80M1140 530l30-10"/>
          <path class="ponds" d="M24 160l4 8M600 36l4 4M678 74l0 4M780 176l4 6M740 42l2 0M560 236l2 2M410 194l6 4M500 170l0 4M520 240l4 0M450 480l4 0M500 576l0 6M546 600l2 0M116 580l2 2M360 636l4 4M1360 186l10 2M1340 470l4-4M1054 326l2 4M930 250l2 2M20 398l2 2M836 404l4 0M1010 440l2 2M484 86l2 0"/>
          <path class="rail" d="M264 0l-4 50 26 80-10 70-30 80 2 80 4 130 0 70 12 60 30 51M256 480l4-40 20-18 114-14 16-60 20-60 10-30 90-26 90-34 30 0 50 10 40 12 80-10 180-14 40-20 50-14 90-90 60-24 28-30"/>
          <path class="secondary" d="M1264 0l-16 26-60 24-46 44-40 20-20 50-70 40-64 10-40 24-10 50-20 30-36 10-40 50-20 14-24 60-14 50-40 30-50 60-24 14M844 330l-40-22M1052 408l-10 60-30 60 0 30-40 70M300 300l0 40"/>
          <path class="primary" d="M266 0l0 40 20 80 10 66-10 60 6 90 2 120 10 100 10 60 10 65M264 290l-34 4-40 54-86 10-10 36-44 8-30 30-20 50M306 306l80 20 40 20 20-24 14-20 40 14 50 10 70-46 30-14 40-2 34 10 36-10M790 245l60 30 80 40 60 50 60 30 60 40M1132 470l4 60 10 40 0 60M0 630l30 24 14 27"/>
          <path class="wood" d="M160 668l26-4 0 17h-30z"/>
          <text class="town" x="597" y="117" textLength="244">Lingareddipalle</text>
          <text class="town" x="255" y="277" textLength="110">Tupran</text>
          <text class="town" x="763" y="267" textLength="104">Gajwel</text>
          <text class="town" x="1042" y="465" textLength="160">Jagdevpur</text>
        </g>
        <!-- location marker -->
        <path d="M846 226q4-16 16-24 14-5 9 6-7 12-20 18z" filter="url(#soft)" opacity=".45"/>
        <g transform="translate(832 183.500) scale(1.120)">
          <path d="M12.500.5C5.800.500.500 5.900.500 12.500c0 2.700.9 4.600 1.900 6.600L12.500 40.500 22.600 19.100c1-2 1.900-3.900 1.900-6.600C24.500 5.900 19.200.500 12.500.500z" fill="url(#markerFill)" stroke="#2e6c97"/>
          <path d="M12.500 1.500c-6.100 0-11 4.900-11 11 0 2.500.8 4.200 1.800 6.200L12.500 38l9.200-19.300c1-2 1.800-3.700 1.800-6.200 0-6.100-4.900-11-11-11z" fill="none" stroke="#fff" stroke-opacity=".18"/>
          <circle cx="12.500" cy="12.500" r="4.300" fill="#fff"/>
        </g>
      </svg>
      <div class="zoom">
        <span><svg width="14" height="14"><path d="M7 0v14M0 7h14" stroke="#000" stroke-width="2.400"/></svg></span>
        <span><svg width="14" height="14"><path d="M0 7h14" stroke="#000" stroke-width="2"/></svg></span>
      </div>
      <div class="attribution">
        <svg width="18" height="12"><path fill="#4c7be1" d="M0 0h18v6H0z"/><path fill="#ffd500" d="M0 6h18v5H0z"/><path fill="#e0bc00" d="M0 11h18v1H0z"/></svg>
        <span class="credits"><a>Leaflet</a> | © <a>OpenStreetMap</a> contributors</span>
      </div>
    </div>

    <div class="results-head">
      <h2 class="results-title">
        <svg width="33" height="41" viewBox="0 0 33 41">
          <g fill="none" stroke="#f7b84a" stroke-width="2.300"><path d="M7 6H4Q1.200 6 1.200 9q0 5 7 7"/><path d="M26 6h3q2.800 0 2.800 3 0 5-7 7"/></g>
          <path d="M6 1h21v8q0 9-8 13v3q0 2 3 3H11q3-1 3-3v-3Q6 18 6 9z" fill="url(#cup)"/>
          <path d="M4 28h25l2 13H2z" fill="#93536c"/><path d="M2.300 39h28.400l.3 2H2z" fill="#7c4560"/>
          <path d="M11 32h11v4H11z" fill="#fbc45c"/>
        </svg>
        <span>Top Crop Recommendations</span>
      </h2>
      <button class="download">
        <svg width="14" height="18" viewBox="0 0 14 18"><path d="M0 0h9.500L14 4.500V18H0z" fill="#e4dbef"/><path d="M9.500 0 14 4.500H9.500z" fill="#b7a9c9"/><path d="M0 17h14v1H0z" fill="#cdbcdd"/><path d="M2.800 6.300h8.400M2.800 8.500h8.400M2.800 10.700h8.400M2.800 12.800h5.500" stroke="#a396b3"/></svg>
        <span>Download Report</span>
      </button>
    </div>
    <section class="crop-card">
      <div class="crop-summary">
        <svg width="12" height="8" viewBox="0 0 12 8" class="stroke-dark"><path d="M1.200 1.200 6 6l4.800-4.800"/></svg>
        <span class="crop-label"><b>#1: Wheat</b> (Confidence: 26.00%)</span>
      </div>
    </section>
  </main>
</div>
</body>
</html>
```
FILE: styles.css
```css
* { box-sizing: border-box; }
html, body { margin: 0; height: 100%; overflow: hidden; }
body {
  font-family: "Noto Sans CJK SC", "Noto Sans", sans-serif;
  font-size: 16.2px;
  letter-spacing: -.06px;
  color: #31333f;
  background: #fff;
}
h1, h2, h3 { margin: 0; font-weight: 500; white-space: nowrap; }
h2, h3 { -webkit-text-stroke: .3px #31333f; }
svg { display: block; flex: none; }
.defs { position: absolute; }
button { font: inherit; letter-spacing: inherit; margin: 0; padding: 0; }
.app { display: flex; height: 891px; overflow: hidden; }

.sidebar {
  width: 277px; flex: none; background: #f0fff0;
  padding: 0 26px 0 16px; display: flex; flex-direction: column;
}
.collapse { height: 88px; flex: none; display: flex; justify-content: flex-end; padding: 15px 10px 0 0; }
.stroke-grey, .stroke-dark, .stroke-thick { fill: none; }
.stroke-grey { stroke: #7f8688; stroke-width: 2; }
.stroke-dark { stroke: #31333f; stroke-width: 1.9; }
.stroke-thick { stroke: #31333f; stroke-width: 2.4; }
.side-heading { height: 36px; line-height: 36px; font-size: 20.25px; letter-spacing: -.16px; display: flex; align-items: center; }
.side-icon { width: 29.5px; margin-right: 5px; display: flex; justify-content: center; }
.settings { margin-top: 31px; }
.label { height: 24px; line-height: 24px; font-size: 14.2px; margin-top: 14px; }
.label-language { margin-top: 15px; }
.field {
  height: 45px; margin-top: 7px; padding: 0 17px 3px 14px; background: #fff; border-radius: 9px;
  display: flex; align-items: center; justify-content: space-between;
}
.select { margin-top: 6px; }
.select svg { margin-top: 2px; }
.btn { background: #2e8b57; color: #fff; border: 1px solid #2a7d4e; border-radius: 9px; font-weight: 500; white-space: nowrap; letter-spacing: -.22px; }
.btn-find { width: 131px; height: 45px; margin-top: 18px; padding-bottom: 4px; }
.divider { width: 100%; height: 1px; border: 0; margin: 54px 0 0; background: #c8d5ca; flex: none; }
.override {
  height: 69px; margin-top: 36px; border: 1px solid #c9d6cb; border-radius: 9px;
  display: flex; align-items: center; padding: 0 0 2px 20px; gap: 16.5px;
}
.override-text { line-height: 28px; white-space: nowrap; margin-top: -2px; }
.microscope { display: inline-block; vertical-align: -2px; margin: 0 7px 0 3px; }
.btn-generate { height: 69px; margin-top: 18px; border-color: #ff4b4b; display: flex; flex-direction: column; align-items: center; line-height: 28.8px; padding-top: 4px; }
.gen-line { display: flex; align-items: center; gap: 8px; padding-left: 2px; }

.main { flex: 1; min-width: 0; padding: 0 86px 0 90px; display: flex; flex-direction: column; }
.topbar { height: 135px; flex: none; display: flex; justify-content: flex-end; align-items: flex-start; gap: 27px; margin-right: -69px; padding-top: 14px; }
.deploy { font-size: 14.2px; line-height: 16px; }
.title {
  height: 83px; flex: none; border-bottom: 3px solid #2e8b57; padding: 0 0 20px 18px; letter-spacing: -.22px;
  display: flex; align-items: center; gap: 28px; font-size: 44.55px; line-height: 60px; font-weight: 700;
}
.title svg { margin-top: 3px; }
.analysis { height: 40px; flex: none; margin-top: 10px; padding-left: 12px; display: flex; align-items: center; gap: 18px; font-size: 28.35px; line-height: 40px; letter-spacing: -.16px; }
.analysis svg { margin-top: 2px; }

.map { position: relative; height: 450px; flex: none; margin-top: 19px; background: #f2efe9; overflow: hidden; letter-spacing: 0; }
.map-canvas path { stroke-linejoin: round; }
.minor, .admin, .border, .river, .stream, .river-border, .rail, .secondary, .primary, .halo, .gorge, .gorge-halo, .ponds, .wetland, .forest-band { fill: none; }
.farm { fill: #eef0d8; }
.wood { fill: #bddab1; }
.forest-band { stroke: #bddab1; stroke-width: 14; }
.orchard { fill: #d3debb; }
.urban { fill: #dcdad8; }
.lime { fill: #dff0c8; }
.pink { fill: #ebdbe8; }
.water { fill: #aad3df; }
.island { fill: #f2efe9; }
.minor { stroke: #c3c1c3; stroke-width: 2.8; }
.admin { stroke: #c4abc6; stroke-width: 4; stroke-dasharray: 18 4 4 4; }
.border { stroke: #b59fc0; stroke-width: 6; }
.river { stroke: #a2d0df; stroke-width: 5; }
.stream { stroke: #a2d3e2; stroke-width: 4.5; stroke-dasharray: 22 12; }
.river-border { stroke: #9aaccb; stroke-width: 5; }
.ponds { stroke: #9fd2e2; stroke-width: 9; }
.wetland { stroke: #4aa3f2; stroke-width: 3.5; }
.rail { stroke: #939191; stroke-width: 3.6; }
.secondary { stroke: #fbc374; stroke-width: 6; }
.primary { stroke: #fa9278; stroke-width: 7.5; }
.halo { stroke: #b5d6b0; stroke-width: 12; stroke-opacity: .8; }
.halo-edge { opacity: .35; }
.gorge-halo { stroke: #a3cfa7; stroke-width: 13; }
.gorge { stroke: #5b9c83; stroke-width: 6; }
.map text { font-family: "Noto Sans", sans-serif; paint-order: stroke; stroke: rgba(255, 255, 255, .75); stroke-width: 6px; stroke-linejoin: round; }
.town { font-size: 37px; fill: #3b3b3b; }
.city { font-size: 46px; fill: #333; }
.district { font-size: 42px; fill: #a582aa; }
.taluk, .lake, .park { font-size: 36px; font-style: italic; }
.taluk { fill: #a07ba6; }
.lake { fill: #5a8dbd; }
.park { fill: #329a35; font-weight: 600; }

.zoom { position: absolute; left: 11px; top: 11px; width: 38px; border: 2px solid rgba(0, 0, 0, .22); border-radius: 5px; background: #fff; background-clip: padding-box; }
.zoom span { height: 33.5px; display: flex; align-items: center; justify-content: center; }
.zoom span + span { border-top: 1px solid #ccc; }
.attribution {
  position: absolute; right: 0; bottom: 0; width: 347px; height: 25px; padding: 0 5px; background: rgba(255, 255, 255, .8);
  display: flex; align-items: center; gap: 5px; white-space: nowrap;
  font: 18px/24px "Liberation Sans", Arial, sans-serif; color: #333;
}
.credits { margin-top: -2px; }
.attribution a { color: #0078a8; }

.results-head { display: flex; justify-content: space-between; align-items: flex-start; height: 85px; margin-top: 27px; flex: none; }
.results-title { display: flex; align-items: center; gap: 19px; height: 50px; margin: 15px 0 0 11px; font-size: 36.45px; line-height: 50px; letter-spacing: -.28px; }
.results-title svg { margin-top: 2px; }
.download { width: 351px; height: 45px; border: 1px solid #d6d6d9; border-radius: 9px; background: #fff; color: #31333f; display: flex; align-items: center; justify-content: center; gap: 9px; padding: 0 0 4px 5px; }
.crop-card { height: 200px; flex: none; border: 1px solid #d3d9d3; border-radius: 9px; }
.crop-summary { height: 43px; background: #f0fff0; border-radius: 8px; display: flex; align-items: center; gap: 14px; padding: 0 0 3px 19px; letter-spacing: -.15px; }
.crop-label b { font-weight: 700; }
```
